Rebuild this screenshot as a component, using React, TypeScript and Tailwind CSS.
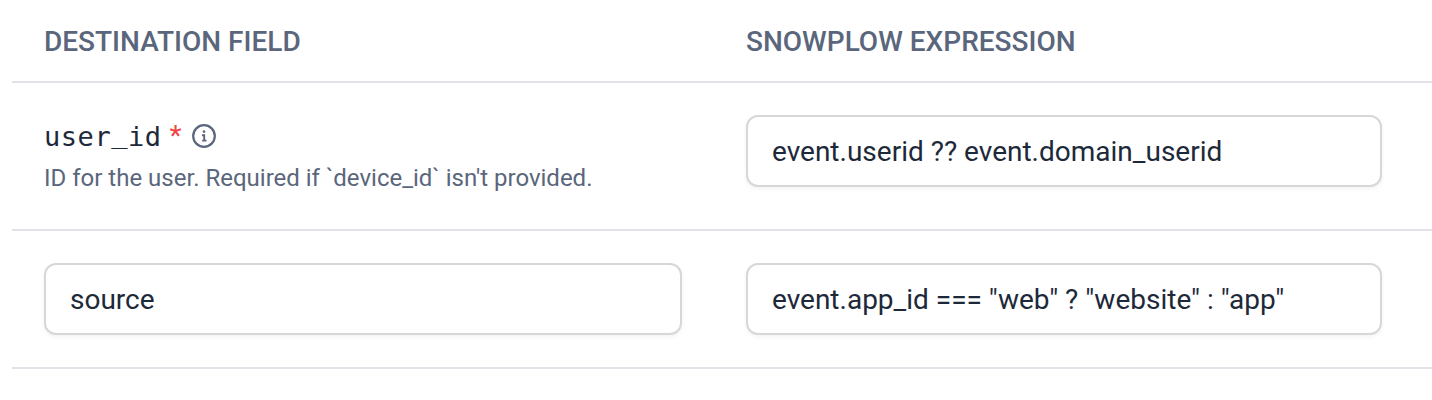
import React from "react";

function Field({ value }: { value: string }) {
  return (
    <div className="flex h-[72px] items-center rounded-[12px] border-2 border-[#d6d7d7] bg-white px-6 pt-0.5 text-[28px] text-[#1d2939] shadow-[0_2px_4px_rgba(0,0,0,0.05)]">
      <span className="whitespace-pre">{value}</span>
    </div>
  );
}

export default function App() {
  return (
    <div className="h-[400px] w-[1432px] overflow-hidden bg-white pl-3 font-['Roboto',sans-serif]">
      <div className="flex h-[83px] border-b-2 border-[#e2e2e8] pl-8 text-[28px] font-medium text-[#5a667b]">
        <div className="w-[702px] pt-[22px] leading-[40px]">DESTINATION FIELD</div>
        <div className="pt-[22px] leading-[40px]">SNOWPLOW EXPRESSION</div>
      </div>
      <div className="flex h-[148px] border-b-2 border-[#e2e2e8] pl-8">
        <div className="w-[702px] pt-[33px]">
          <div className="flex h-10 items-center">
            <span className="pt-0.5 font-['DejaVu_Sans_Mono',monospace] text-[27px] leading-10 tracking-[0.54px] text-[#1d2939]">user<span className="relative -top-[3px]">_</span>id</span>
            <span className="ml-2 text-[28px] leading-10 text-[#ef4444]">*</span>
            <svg className="ml-[10.5px] size-6" viewBox="0 0 24 24" fill="none" stroke="#5a667b" strokeWidth="2.2">
              <circle cx="12" cy="12" r="10.8" />
              <path d="M10 11.2h2.2v5.4M10.2 16.6h4.3" strokeWidth="1.9" />
              <circle cx="12" cy="7.6" r="1.3" fill="#5a667b" stroke="none" />
            </svg>
          </div>
          <div className="pt-px text-[24px] leading-[42px] text-[#5a667b]">ID for the user. Required if `device_id` isn't provided.</div>
        </div>
        <div className="w-[636px] pt-8"><Field value="event.userid ?? event.domain_userid" /></div>
      </div>
      <div className="flex h-[138px] border-b-2 border-[#e2e2e8] pl-8">
        <div className="mr-16 w-[638px] pt-8"><Field value="source" /></div>
        <div className="w-[636px] pt-8"><Field value={'event.app_id === "web" ? "website" : "app"'} /></div>
      </div>
    </div>
  );
}
